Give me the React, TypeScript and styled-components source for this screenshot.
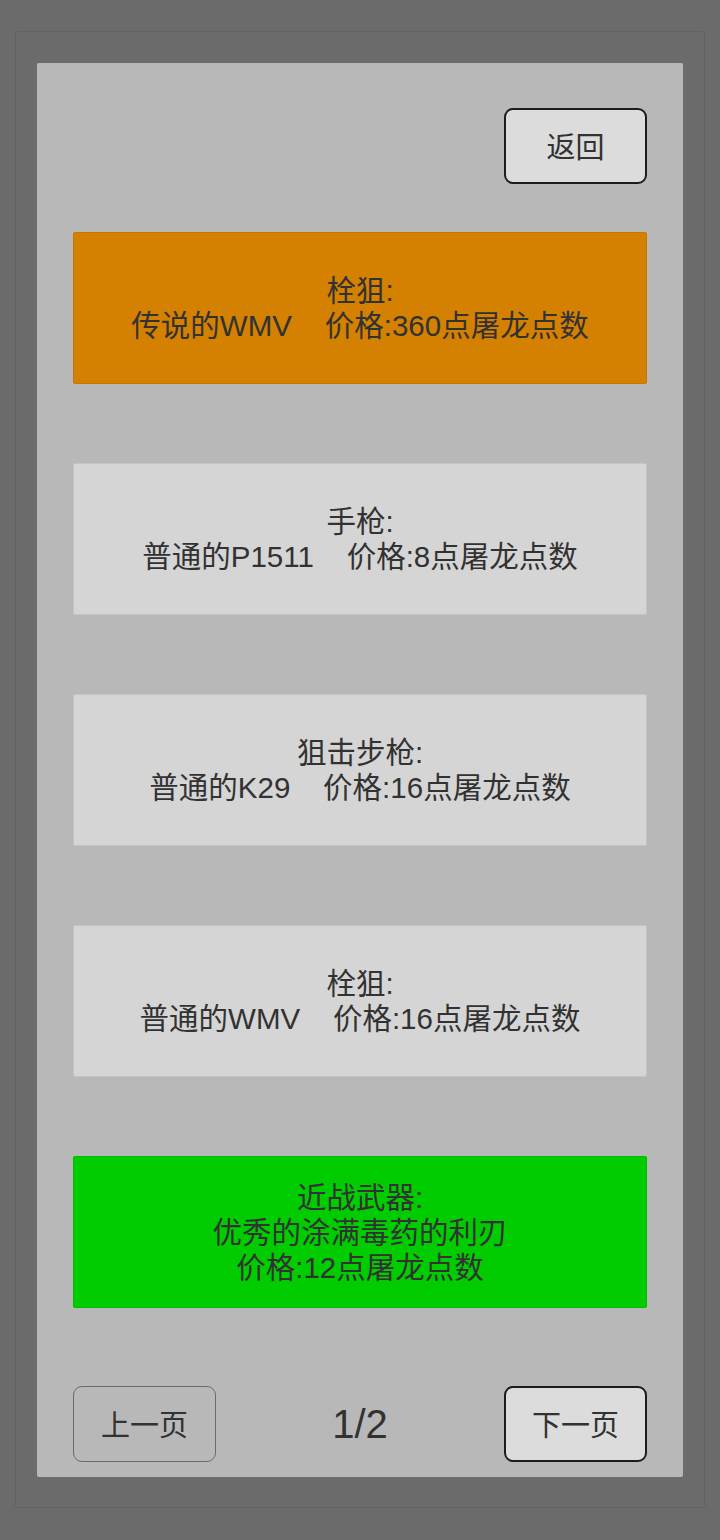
import React from "react";
import styled, { createGlobalStyle } from "styled-components";

const Global = createGlobalStyle`
  html, body { margin: 0; padding: 0; background: #6b6b6b; }
  body { font-family: "Liberation Sans", "Noto Sans CJK SC", sans-serif; }
`;

const Screen = styled.div`
  width: 720px;
  height: 1540px;
  box-sizing: border-box;
  padding: 31px 15px 32px;
  display: flex;
`;

const Frame = styled.div`
  flex: 1;
  box-sizing: border-box;
  border: 1px solid #626262;
  border-radius: 3px;
  background: #6b6b6b;
  padding: 31px 21px 30px;
  display: flex;
`;

const Panel = styled.div`
  flex: 1;
  background: #b8b8b8;
  border-radius: 2px;
  box-sizing: border-box;
  padding: 45px 36px 15px;
  display: flex;
  flex-direction: column;
`;

const TopBar = styled.div`
  display: flex;
  justify-content: flex-end;
`;

const Button = styled.button<{ $active?: boolean }>`
  width: 143px;
  height: 76px;
  box-sizing: border-box;
  border-radius: 9px;
  border: ${(p) => (p.$active ? "2px solid #1c1c1c" : "1px solid #6a6a6a")};
  background: ${(p) => (p.$active ? "#dcdcdc" : "transparent")};
  color: #323232;
  font-family: "Liberation Sans", "Noto Sans CJK SC", sans-serif;
  font-size: 29px;
  padding: 0 0 3px;
  display: flex;
  align-items: center;
  justify-content: center;
`;

const List = styled.div`
  margin-top: 48px;
  display: flex;
  flex-direction: column;
  gap: 79px;
`;

const Card = styled.div<{ $bg: string }>`
  height: 152px;
  box-sizing: border-box;
  background: ${(p) => p.$bg};
  border: 1px solid rgba(0, 0, 0, 0.08);
  border-radius: 2px;
  display: flex;
  align-items: center;
  justify-content: center;
  text-align: center;
  white-space: pre;
  color: #323232;
  font-size: 29.5px;
  line-height: 35px;
`;

const Footer = styled.div`
  margin-top: 78px;
  display: flex;
  align-items: center;
  justify-content: space-between;
`;

const PageNum = styled.div`
  font-size: 40px;
  color: #323232;
`;

const items = [
  { bg: "#d48000", text: "栓狙:\n传说的WMV    价格:360点屠龙点数" },
  { bg: "#d5d5d5", text: "手枪:\n普通的P1511    价格:8点屠龙点数" },
  { bg: "#d5d5d5", text: "狙击步枪:\n普通的K29    价格:16点屠龙点数" },
  { bg: "#d5d5d5", text: "栓狙:\n普通的WMV    价格:16点屠龙点数" },
  { bg: "#00cc00", text: "近战武器:\n优秀的涂满毒药的利刃\n价格:12点屠龙点数" },
];

export default function App() {
  return (
    <>
      <Global />
      <Screen>
        <Frame>
          <Panel>
            <TopBar>
              <Button $active>返回</Button>
            </TopBar>
            <List>
              {items.map((it, i) => (
                <Card key={i} $bg={it.bg}>
                  {it.text}
                </Card>
              ))}
            </List>
            <Footer>
              <Button>上一页</Button>
              <PageNum>1/2</PageNum>
              <Button $active>下一页</Button>
            </Footer>
          </Panel>
        </Frame>
      </Screen>
    </>
  );
}
